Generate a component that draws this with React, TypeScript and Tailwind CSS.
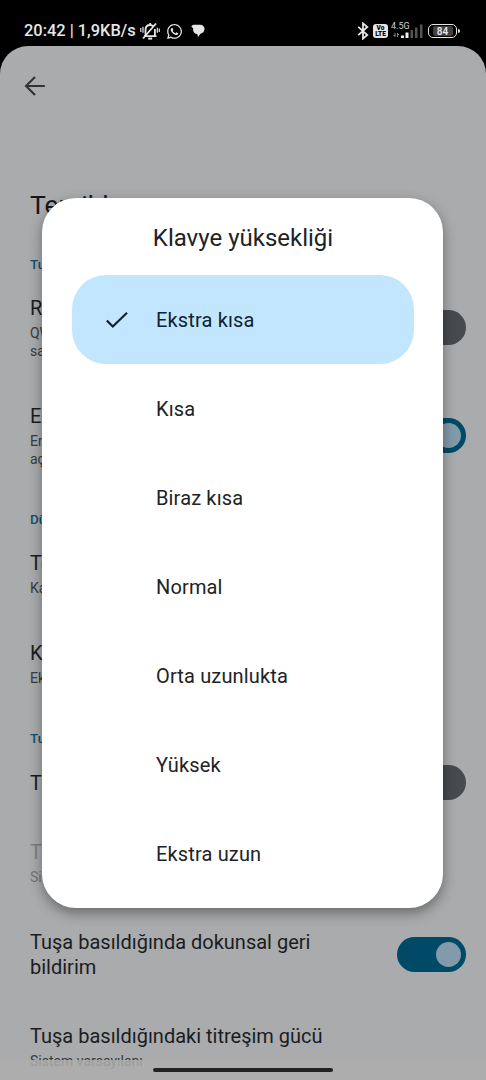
import React from "react";
import clsx from "clsx";
import { FaWhatsapp } from "react-icons/fa";

interface SettingRowProps {
  title: string;
  summary?: string;
  toggle?: "on" | "off";
  disabled?: boolean;
  className?: string;
}

const OPTIONS = ["Ekstra kısa", "Kısa", "Biraz kısa", "Normal", "Orta uzunlukta", "Yüksek", "Ekstra uzun"];

const Toggle: React.FC<{ state: "on" | "off" }> = ({ state }) => (
  <div
    className={clsx(
      "flex h-[35px] w-[69px] shrink-0 items-center rounded-full px-[5px]",
      state === "on" ? "justify-end bg-[#004a68]" : "justify-start bg-[#474b4d]"
    )}
  >
    <div className={clsx("h-[25px] w-[25px] rounded-full", state === "on" ? "bg-[#839aaa]" : "bg-[#a9abac]")} />
  </div>
);

const Category: React.FC<{ label: string; className: string }> = ({ label, className }) => (
  <h2 className={clsx("text-[13.5px] leading-5 font-medium text-[#10516e]", className)}>{label}</h2>
);

const SettingRow: React.FC<SettingRowProps> = ({ title, summary, toggle, disabled, className }) => (
  <div className={clsx("flex items-center justify-between", className)}>
    <div className={disabled ? "text-[#7d8082]" : "text-[#1a1d1f]"}>
      <p className="pt-px text-[20px] leading-[25px] whitespace-pre">{title}</p>
      {summary && (
        <p
          className={clsx(
            "mt-[3px] text-[14px] leading-[18px] whitespace-pre",
            disabled ? "text-[#737678]" : "text-[#393c3e]"
          )}
        >
          {summary}
        </p>
      )}
    </div>
    {toggle && <Toggle state={toggle} />}
  </div>
);

const StatusBar = () => (
  <div className="flex h-[46px] shrink-0 items-start justify-between bg-black pt-[21px] pr-[26px] pl-6 text-[#e6e6e6]">
    <div className="flex h-5 items-center">
      <span className="w-[113px] text-[16.4px] font-medium whitespace-nowrap">20:42 | 1,9KB/s</span>
      <svg className="ml-[3px] h-[18px] w-5" viewBox="0 0 20 18" fill="none" stroke="currentColor" strokeWidth="1.8">
        <path d="M4 14.2h12.5M5.5 14V8c0-3 1.8-5 4.7-5 1.3 0 2.3.5 3 1.3M14.9 7v7M10.2 1v2" />
        <path d="M3 16.5 16 1.5" />
        <path d="M8.2 16.6h4" strokeWidth="2" />
        <path d="M.8 6v4M3 4.8v6M17.3 5.8v5M19.3 6.5v3.5" strokeWidth="1.2" />
      </svg>
      <FaWhatsapp className="ml-[6px] h-[17px] w-[17px]" />
      <svg className="ml-2 h-[14px] w-[14px]" viewBox="0 0 14 14" fill="currentColor">
        <path d="M3.500.8h5.700c2.500 0 4.300 1.700 4.300 4.200S12 9.200 9.500 9.700L7 13 6.300 10C3.800 9.800 2.200 8.300 2.200 6.200V4.400L.3 2.500C.8 1.300 2 .8 3.500.8Z" />
      </svg>
    </div>
    <div className="flex h-5 items-center">
      <svg className="h-[18px] w-3" viewBox="0 0 12 18" fill="none" stroke="currentColor" strokeWidth="1.8">
        <path d="m1.300 4.800 9 8.200-4.300 3.600V1.400L10.300 5l-9 8.200" />
      </svg>
      <div className="ml-[4px] flex h-[14px] w-[15px] flex-col items-center justify-center rounded-[3px] bg-[#e6e6e6] text-[6.5px] leading-[6px] font-black text-black">
        <span>Vo</span>
        <span>LTE</span>
      </div>
      <div className="relative ml-[3px] h-4 w-[33px]">
        <span className="absolute -top-[1px] left-0 text-[9px] leading-[8px] text-[#d0d0d0]">4.5G</span>
        <svg className="h-4 w-[33px]" viewBox="0 0 33 16">
          <path d="M4 10v4M2.500 12.500H4M6.500 10v4M6.500 11.500H8" stroke="#888" strokeWidth="1" />
          <path d="M10 12.500h3v2.500h-3zM14.500 9.500h3v5.500h-3z" fill="#eee" />
          <path d="M19.500 7h2.500v8h-2.500zM24 4.500h2.500v10.500h-2.500zM29 1.500h2.500v13.500h-2.500z" fill="#555" />
        </svg>
      </div>
      <div className="ml-[4px] flex h-[14px] w-[29px] items-center justify-center rounded-[5px] border-[1.5px] border-[#e6e6e6] p-px">
        <div className="flex h-full w-[20px] items-center justify-center rounded-[2px] bg-[#404040] text-[10px] font-semibold">84</div>
      </div>
      <div className="ml-px h-1 w-[2px] rounded-r bg-[#e6e6e6]" />
    </div>
  </div>
);

const SettingsPage = () => (
  <main className="flex-1 overflow-hidden rounded-t-[28px] bg-[#a9abac] pr-5 pl-[30px]">
    <header className="-ml-[6px] flex h-20 items-center">
      <svg className="h-[22px] w-[22px]" viewBox="0 0 22 22" fill="none" stroke="#303335" strokeWidth="2.1">
        <path d="M11 2 2 11l9 9M2.300 11h18.500" />
      </svg>
    </header>
    <h1 className="mt-[59px] text-[26.5px] leading-10 text-[#15181a]">Tercihler</h1>

    <Category label="Tuşlar" className="mt-[29px]" />
    <SettingRow className="mt-[21px]" title="Rakam satırı" summary={"QWERTY klavyenin en üst\nsatırında göster"} toggle="off" />
    <SettingRow className="mt-[43px]" title="Emoji tuşu" summary={"Emoji tuşunu göstermek için\naçın"} toggle="on" />

    <Category label="Düzen" className="mt-[41px]" />
    <SettingRow className="mt-[21px]" title="Tek el modu" summary="Kapalı" />
    <SettingRow className="mt-[43px]" title="Klavye yüksekliği" summary="Ekstra kısa" />

    <Category label="Tuşa basma" className="mt-[41px]" />
    <SettingRow className="mt-[17px]" title="Tuş sesi" toggle="off" />
    <SettingRow className="mt-[39px]" title="Tuş sesi düzeyi" summary="Sistem varsayılanı" disabled />
    <SettingRow className="mt-[43px]" title={"Tuşa basıldığında dokunsal geri\nbildirim"} toggle="on" />
    <SettingRow className="mt-[43px]" title="Tuşa basıldığındaki titreşim gücü" summary="Sistem varsayılanı" />
  </main>
);

const HeightDialog = () => (
  <div
    role="dialog"
    className="absolute top-[198px] left-[42px] h-[710px] w-[401px] rounded-[34px] bg-white px-[30px] shadow-[0_5px_13px_rgba(0,0,0,0.38)]"
  >
    <h2 className="flex h-[77px] items-center justify-center pt-[2px] pl-px text-[24px] text-[#202325]">Klavye yüksekliği</h2>
    <ul>
      {OPTIONS.map((option, i) => (
        <li
          key={option}
          className={clsx(
            "flex h-[89px] w-[342px] items-center rounded-[34px] text-[20px] tracking-[0.15px]",
            i === 0 ? "bg-[#c3e6ff] text-[#0b2434]" : "text-[#202325]"
          )}
        >
          <div className="w-[84px] pl-[33px]">
            {i === 0 && (
              <svg className="h-[18px] w-6" viewBox="0 0 24 18" fill="none" stroke="#10212c" strokeWidth="2.2">
                <path d="m1.800 9.500 6 6L22 1.800" />
              </svg>
            )}
          </div>
          <span>{option}</span>
        </li>
      ))}
    </ul>
  </div>
);

export default function App() {
  return (
    <div className="relative flex h-[1080px] w-[486px] flex-col overflow-hidden bg-black font-['Roboto',sans-serif]">
      <StatusBar />
      <SettingsPage />
      <HeightDialog />

      {/* Barra de gestos */}
      <div className="absolute bottom-0 left-0 flex h-5 w-full justify-center bg-[#adadac]/85 pt-2">
        <div className="h-1 w-[180px] rounded-full bg-[#222]" />
      </div>
    </div>
  );
}
